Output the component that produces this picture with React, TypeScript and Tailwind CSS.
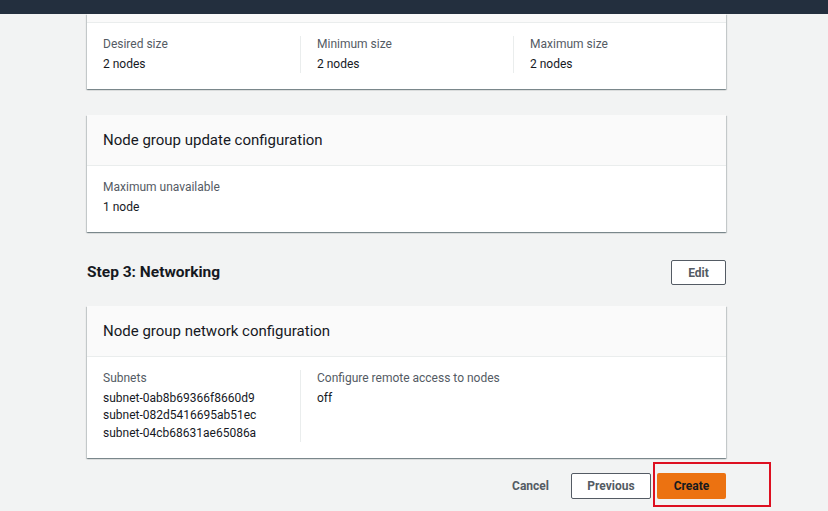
import React from 'react'

const font = { fontFamily: 'Roboto, "Liberation Sans", sans-serif' }

function Field({ label, values }: { label: string; values: string[] }) {
    return (
        <div className="flex flex-col">
            <div className="text-[12px] leading-[17px] text-[#545b64]">{label}</div>
            <div className="mt-[2.5px] flex flex-col">
                {values.map((v) => (
                    <div key={v} className="text-[12px] leading-[17.5px] text-[#16191f]">
                        {v}
                    </div>
                ))}
            </div>
        </div>
    )
}

function Card({ title, children, stub }: { title?: string; children: React.ReactNode; stub?: boolean }) {
    return (
        <div className="bg-white shadow-[0_1px_1px_0_rgba(0,28,36,0.3),1px_1px_1px_0_rgba(0,28,36,0.15),-1px_1px_1px_0_rgba(0,28,36,0.15)]">
            {stub ? (
                <div className="h-[9px] bg-[#fafafa] border-b border-[#eaeded]" />
            ) : (
                <div className="h-[51px] flex items-center px-4 bg-[#fafafa] border-b border-[#eaeded]">
                    <h2 className="text-[15px] text-[#16191f]">{title}</h2>
                </div>
            )}
            <div className="flex pl-4 pt-[13px] pb-[16px]">{children}</div>
        </div>
    )
}

export default function App() {
    return (
        <div className="min-h-[511px] w-full bg-[#f2f3f3]" style={font}>
            <div className="h-[14px] bg-[#232f3e]" />
            <div className="w-[639px] ml-[87px]">
                <Card stub>
                    <div className="w-[197px]">
                        <Field label="Desired size" values={['2 nodes']} />
                    </div>
                    <div className="w-[213px] border-l border-[#eaeded] pl-4">
                        <Field label="Minimum size" values={['2 nodes']} />
                    </div>
                    <div className="flex-1 border-l border-[#eaeded] pl-4">
                        <Field label="Maximum size" values={['2 nodes']} />
                    </div>
                </Card>

                <div className="mt-[26px]">
                    <Card title="Node group update configuration">
                        <Field label="Maximum unavailable" values={['1 node']} />
                    </Card>
                </div>

                <div className="mt-[28px] flex items-center justify-between">
                    <h3 className="text-[15.5px] font-bold text-[#16191f]">Step 3: Networking</h3>
                    <button className="h-[25px] w-[55px] rounded-[2px] border border-[#545b64] bg-white text-[12px] font-bold text-[#545b64]">
                        Edit
                    </button>
                </div>

                <div className="mt-[21px]">
                    <Card title="Node group network configuration">
                        <div className="w-[197px]">
                            <Field
                                label="Subnets"
                                values={[
                                    'subnet-0ab8b69366f8660d9',
                                    'subnet-082d5416695ab51ec',
                                    'subnet-04cb68631ae65086a',
                                ]}
                            />
                        </div>
                        <div className="flex-1 border-l border-[#eaeded] pl-4">
                            <Field label="Configure remote access to nodes" values={['off']} />
                        </div>
                    </Card>
                </div>

                <div className="mt-[15px] flex items-center justify-end gap-[6px]">
                    <button className="h-[26px] px-4 text-[12px] font-bold text-[#545b64]">Cancel</button>
                    <button className="h-[26px] w-[80px] rounded-[2px] border border-[#545b64] bg-white text-[12px] font-bold text-[#545b64]">
                        Previous
                    </button>
                    <div className="relative">
                        <button className="h-[26px] w-[69px] rounded-[2px] bg-[#ec7211] text-[12px] font-bold text-[#16191f]">
                            Create
                        </button>
                        <span className="pointer-events-none absolute left-[-4px] top-[-11px] h-[45px] w-[118px] border-[2.5px] border-[#dd0f20]" />
                    </div>
                </div>
            </div>
        </div>
    )
}
